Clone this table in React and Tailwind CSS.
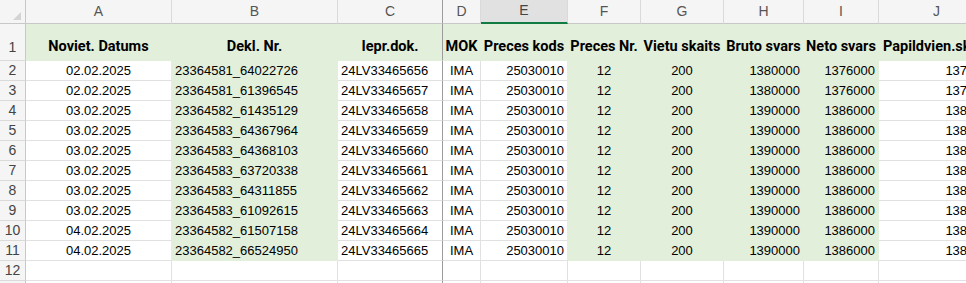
const COLS = [
  { key: 'A', align: 'justify-center', head: 'Noviet. Datums' },
  { key: 'B', align: 'justify-start', head: 'Dekl. Nr.', green: true },
  { key: 'C', align: 'justify-start', head: 'Iepr.dok.' },
  { key: 'D', align: 'justify-center', head: 'MOK' },
  { key: 'E', align: 'justify-end', head: 'Preces kods' },
  { key: 'F', align: 'justify-center', head: 'Preces Nr.', green: true },
  { key: 'G', align: 'justify-center', head: 'Vietu skaits', green: true },
  { key: 'H', align: 'justify-end', head: 'Bruto svars', green: true },
  { key: 'I', align: 'justify-end', head: 'Neto svars', green: true },
  { key: 'J', align: 'justify-end', head: 'Papildvien.sk' },
]

const ROWS = [
  ['02.02.2025', '23364581_64022726', '24LV33465656', 'IMA', '25030010', '12', '200', '1380000', '1376000', '1376000'],
  ['02.02.2025', '23364581_61396545', '24LV33465657', 'IMA', '25030010', '12', '200', '1380000', '1376000', '1376000'],
  ['03.02.2025', '23364582_61435129', '24LV33465658', 'IMA', '25030010', '12', '200', '1390000', '1386000', '1386000'],
  ['03.02.2025', '23364583_64367964', '24LV33465659', 'IMA', '25030010', '12', '200', '1390000', '1386000', '1386000'],
  ['03.02.2025', '23364583_64368103', '24LV33465660', 'IMA', '25030010', '12', '200', '1390000', '1386000', '1386000'],
  ['03.02.2025', '23364583_63720338', '24LV33465661', 'IMA', '25030010', '12', '200', '1390000', '1386000', '1386000'],
  ['03.02.2025', '23364583_64311855', '24LV33465662', 'IMA', '25030010', '12', '200', '1390000', '1386000', '1386000'],
  ['03.02.2025', '23364583_61092615', '24LV33465663', 'IMA', '25030010', '12', '200', '1390000', '1386000', '1386000'],
  ['04.02.2025', '23364582_61507158', '24LV33465664', 'IMA', '25030010', '12', '200', '1390000', '1386000', '1386000'],
  ['04.02.2025', '23364582_66524950', '24LV33465665', 'IMA', '25030010', '12', '200', '1390000', '1386000', '1386000'],
]

const RIGHT = { gray: 'border-r-[#e1e1e1]', green: 'border-r-[#e2efda]', frozen: 'border-r-[#9c9c9c]' }
const BOTTOM = { gray: 'border-b-[#e1e1e1]', green: 'border-b-[#e2efda]' }

function RowNum({ n, tall }) {
  return (
    <div className={`flex justify-center border-r border-b border-r-[#c8c8c8] border-b-[#dadada] bg-[#f5f5f5] text-[14px] text-[#444] ${tall ? 'items-end pb-[2px]' : 'items-center'}`}>
      {n}
    </div>
  )
}

function rightEdge(ci, fill) {
  if (ci === 2) return RIGHT.frozen
  const next = COLS[ci + 1]
  if (fill(ci) || (next && fill(ci + 1))) return RIGHT.green
  return RIGHT.gray
}

export default function App() {
  return (
    <div className="w-[966px] h-[283px] overflow-hidden bg-white" style={{ fontFamily: '"Liberation Sans", Arial, sans-serif' }}>
      <div className="grid grid-cols-[26px_146px_166px_105px_38px_87px_73px_83px_80px_75px_121px] grid-rows-[24px_37px_repeat(12,20px)] w-max">
        {/* corner */}
        <div className="flex items-end justify-end pr-[4px] pb-[3px] bg-[#f5f5f5] border-r border-b border-r-[#c8c8c8] border-b-[#c8c8c8]">
          <svg width="8" height="8" viewBox="0 0 8 8"><path d="M8 0 L8 8 L0 8 Z" fill="#d4d4d4" /></svg>
        </div>

        {/* column letters */}
        {COLS.map((c, ci) => (
          <div
            key={c.key}
            className={`flex items-end ${c.key === 'J' ? 'justify-start pl-[54px]' : 'justify-center'} pb-[1px] text-[14px] border-r ${ci === 2 ? 'border-r-[#9c9c9c]' : 'border-r-[#dadada]'} ${c.key === 'E' ? 'bg-[#e1e1e1] border-b-2 border-b-[#107c41] text-[#444]' : 'bg-[#f5f5f5] border-b border-b-[#c8c8c8] text-[#555]'}`}
          >
            {c.key}
          </div>
        ))}

        {/* row 1 headers */}
        <RowNum n={1} tall />
        {COLS.map((c, ci) => (
          <div
            key={c.key}
            className={`flex items-end ${c.key === 'J' ? 'justify-start pl-[4px]' : 'justify-center'} pb-[2px] bg-[#e2efda] border-r border-b ${ci === 2 ? RIGHT.frozen : RIGHT.green} ${BOTTOM.green} whitespace-nowrap text-[14.5px] font-bold text-black`}
            style={{ fontFamily: 'Roboto, "Liberation Sans", sans-serif' }}
          >
            {c.head}
          </div>
        ))}

        {/* data rows */}
        {ROWS.map((row, ri) => {
          const fill = (ci) => !!COLS[ci].green
          return [
            <RowNum key={`n${ri}`} n={ri + 2} />,
            ...row.map((v, ci) => {
              const green = fill(ci)
              return (
                <div
                  key={`${ri}-${ci}`}
                  className={`flex items-center ${COLS[ci].align} px-[3px] pt-[1px] whitespace-nowrap text-[13px] text-black border-r border-b ${rightEdge(ci, fill)} ${green ? `bg-[#e2efda] ${BOTTOM.green}` : BOTTOM.gray}`}
                >
                  {v}
                </div>
              )
            }),
          ]
        })}

        {/* empty rows */}
        {[12, 13].map((n) => [
          <RowNum key={`n${n}`} n={n} />,
          ...COLS.map((c, ci) => (
            <div key={`${n}-${c.key}`} className={`border-r border-b ${ci === 2 ? RIGHT.frozen : RIGHT.gray} ${BOTTOM.gray}`} />
          )),
        ])}
      </div>
    </div>
  )
}
